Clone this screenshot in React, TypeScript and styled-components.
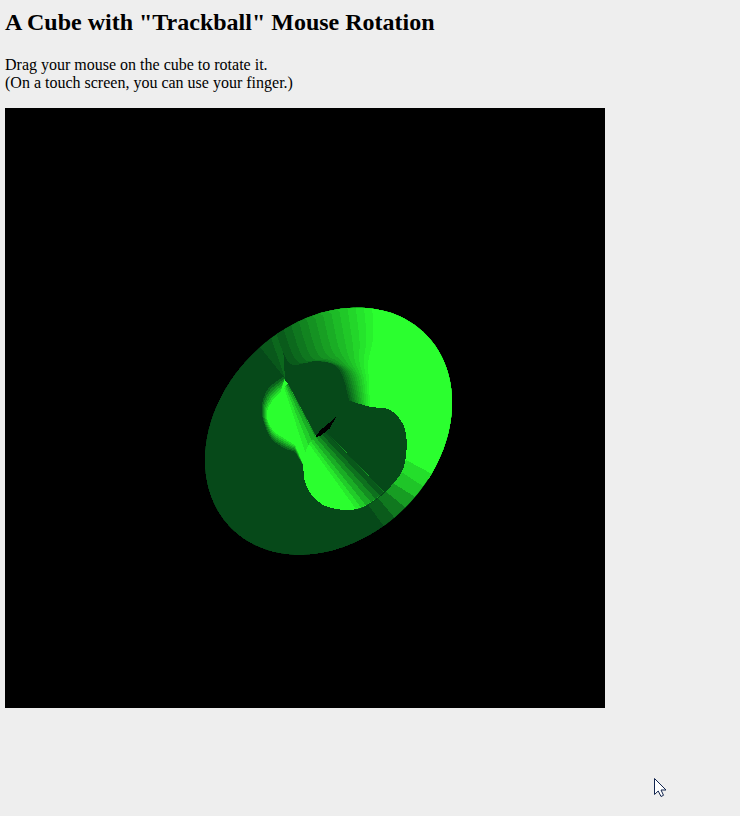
import React from "react";
import styled, { createGlobalStyle } from "styled-components";

type P = [number, number];

const GlobalStyle = createGlobalStyle`
  html, body { margin: 0; padding: 0; background: #eeeeee; }
  body { height: 816px; overflow: hidden; font-family: "Liberation Serif", "Times New Roman", serif; color: #000; }
`;
const Page = styled.main`
  padding-left: 5px;
`;
const Title = styled.h2`
  margin: 0;
  padding: 9px 0 20px;
  font-size: 24px;
  font-weight: 700;
`;
const Intro = styled.p`
  margin: 0 0 16px;
  font-size: 16px;
`;
const Canvas = styled.div`
  width: 600px;
  height: 600px;
  background: #000;
`;
const Scene = styled.svg`
  display: block;
  width: 600px;
  height: 600px;
  shape-rendering: crispEdges;
`;
const Pointer = styled.svg`
  position: absolute;
  left: 653px;
  top: 777px;
  width: 15px;
  height: 21px;
`;

const shade = (t: number) => {
  const mix = (a: number, b: number) => Math.round(a + (b - a) * t);
  return `rgb(${mix(6, 43)},${mix(73, 255)},${mix(25, 47)})`;
};
const DARK = shade(0);

const smooth = (pts: P[], steps = 10): P[] => {
  const out: P[] = [];
  for (let i = 0; i < pts.length - 1; i++) {
    const a = pts[Math.max(i - 1, 0)], b = pts[i], c = pts[i + 1], d = pts[Math.min(i + 2, pts.length - 1)];
    for (let s = 0; s < steps; s++) {
      const u = s / steps, u2 = u * u, u3 = u2 * u;
      const f = (k: 0 | 1) =>
        0.5 * (2 * b[k] + (c[k] - a[k]) * u + (2 * a[k] - 5 * b[k] + 4 * c[k] - d[k]) * u2 + (3 * b[k] - a[k] - 3 * c[k] + d[k]) * u3);
      out.push([f(0), f(1)]);
    }
  }
  out.push(pts[pts.length - 1]);
  return out;
};
const lerpLine = (a: P[], b: P[], t: number): P[] =>
  a.map((p, i) => [p[0] + (b[i][0] - p[0]) * t, p[1] + (b[i][1] - p[1]) * t]);
const str = (pts: P[]) => pts.map((p) => `${p[0].toFixed(1)},${p[1].toFixed(1)}`).join(" ");

const rimPoints: P[] = Array.from({ length: 180 }, (_, i) => {
  const a = (i / 180) * Math.PI * 2;
  const u = 412 * Math.cos(a), v = 325 * Math.sin(a);
  const c = Math.SQRT1_2;
  return [415 + c * u + c * v, 409 - c * u + c * v];
});
const rimLoop = str(rimPoints);

const FAN_DARK: P[] = [[255,105],[300,205],[375,198],[445,220],[478,318]];
const FAN_LIGHT: P[] = [[545,20],[550,120],[535,200],[537,260],[540,335]];
const FAN_CLOSE: P[] = [[600,450],[640,510],[830,612],[900,-100],[100,-100]];

const BULB_OUT: P[] = [[280,245],[232,285],[215,350],[240,425],[280,458],[315,470]];
const BULB_IN: P[] = [[272,290],[245,320],[230,360],[248,405],[285,432],[315,450]];

const STRIPES: { t: number; pts: P[] }[] = [
  { t: 0.82, pts: [[648,495],[745,547],[712,582],[633,530]] },
  { t: 0.68, pts: [[633,530],[712,582],[685,612],[610,565]] },
  { t: 0.46, pts: [[610,565],[685,612],[655,645],[588,590]] },
  { t: 0.26, pts: [[588,590],[655,645],[625,682],[565,610]] },
  { t: 0.1, pts: [[565,610],[625,682],[595,712],[535,630]] },
];

const UPPER_BANDS: { t: number; pts: P[] }[] = [
  { t: 0.08, pts: [[285,250],[205,150],[240,118]] },
  { t: 0.17, pts: [[285,250],[240,118],[275,90]] },
];

const LOBE: P[] = [
  ...smooth([[285,240],[310,215],[375,205],[430,220],[465,265],[470,315]]),
  ...smooth([[470,315],[540,335],[600,345],[640,390],[650,450],[640,520],[610,565],[580,592]]),
  [285,255],
];

const RIGHT_BULB: P[] = [
  ...smooth([[378,424],[355,450],[342,490],[340,515],[345,560],[365,600],[400,630],[440,642],[480,645],[520,635],[560,610],[582,590]]),
  [405,405],
];
const BULB_APEX: P = [150,160];
const BULB_TARGETS: { t: number; p: P }[] = [
  { t: 0.03, p: [582,590] },
  { t: 0.08, p: [568,600] },
  { t: 0.22, p: [555,610] },
  { t: 0.38, p: [540,618] },
  { t: 0.55, p: [525,628] },
  { t: 0.72, p: [510,634] },
  { t: 0.88, p: [495,638] },
];

const LEFT_APEX: P = [262,215];
const LEFT_TARGETS: P[] = [[345,470],[357,455],[368,442],[378,430],[388,418],[397,405],[405,390]];
const LEFT_SHADES = [0.88, 0.72, 0.55, 0.38, 0.22, 0.08];

const SLIVER: P[] = [[375,427],[392,405],[437,367],[420,400],[392,422]];

const Torus = () => {
  const levels = 13;
  const fan = Array.from({ length: levels }, (_, i) => {
    const s = i / (levels - 1);
    const line = smooth(lerpLine(FAN_DARK, FAN_LIGHT, s));
    return { t: 0.1 + 0.9 * s, pts: [...line, ...FAN_CLOSE] };
  });
  const bulb = Array.from({ length: 6 }, (_, i) => {
    const s = i / 5;
    const line = smooth(lerpLine(BULB_OUT, BULB_IN, s));
    return { t: 0.16 + 0.84 * s, pts: [...line, [342,515] as P, [378,424] as P, [285,250] as P] };
  });
  const sweep = (apex: P, a: P, b: P, near: number): P[] => {
    const at = (p: P, k: number): P => [apex[0] + (p[0] - apex[0]) * k, apex[1] + (p[1] - apex[1]) * k];
    return [at(a, near), at(a, 1.25), at(b, 1.25), at(b, near)];
  };
  return (
    <Scene viewBox="0 0 600 600">
      <defs>
        <clipPath id="rim"><polygon points={rimLoop} /></clipPath>
        <clipPath id="rightBulb"><polygon points={str(RIGHT_BULB)} /></clipPath>
        <clipPath id="leftBulb"><polygon points={str(bulb[0].pts)} /></clipPath>
      </defs>
      <g transform="translate(185 187) scale(0.33333)">
        <g clipPath="url(#rim)">
          <polygon points={rimLoop} fill={DARK} />
          {UPPER_BANDS.map((b, i) => <polygon key={i} points={str(b.pts)} fill={shade(b.t)} />)}
          {fan.map((b, i) => <polygon key={i} points={str(b.pts)} fill={shade(b.t)} />)}
          {STRIPES.map((b, i) => <polygon key={i} points={str(b.pts)} fill={shade(b.t)} />)}
          {bulb.map((b, i) => <polygon key={i} points={str(b.pts)} fill={shade(b.t)} />)}
          <g clipPath="url(#leftBulb)">
            {LEFT_SHADES.map((t, i) => (
              <polygon key={i} points={str(sweep(LEFT_APEX, LEFT_TARGETS[i], LEFT_TARGETS[i + 1], 0.25))} fill={shade(t)} />
            ))}
          </g>
          <polygon points={str(LOBE)} fill={DARK} />
          <polygon points={str(RIGHT_BULB)} fill={shade(1)} />
          <g clipPath="url(#rightBulb)">
            {BULB_TARGETS.map((b, i) => {
              const prev = i === 0 ? ([660,600] as P) : BULB_TARGETS[i - 1].p;
              return <polygon key={i} points={str(sweep(BULB_APEX, prev, b.p, 0))} fill={shade(b.t)} />;
            })}
          </g>
          <polygon points={str(SLIVER)} fill="#000" />
        </g>
      </g>
    </Scene>
  );
};

export default function App() {
  return (
    <Page>
      <GlobalStyle />
      <Title>A Cube with "Trackball" Mouse Rotation</Title>
      <Intro>
        Drag your mouse on the cube to rotate it.
        <br />
        (On a touch screen, you can use your finger.)
      </Intro>
      <Canvas>
        <Torus />
      </Canvas>
      <Pointer viewBox="0 0 15 21">
        <path d="M1.5 1.5 V17.5 L5.2 14 L8 19.5 L10.5 18.3 L8 13 H13 Z" fill="#fff" stroke="#13264f" strokeWidth="1" />
      </Pointer>
    </Page>
  );
}
